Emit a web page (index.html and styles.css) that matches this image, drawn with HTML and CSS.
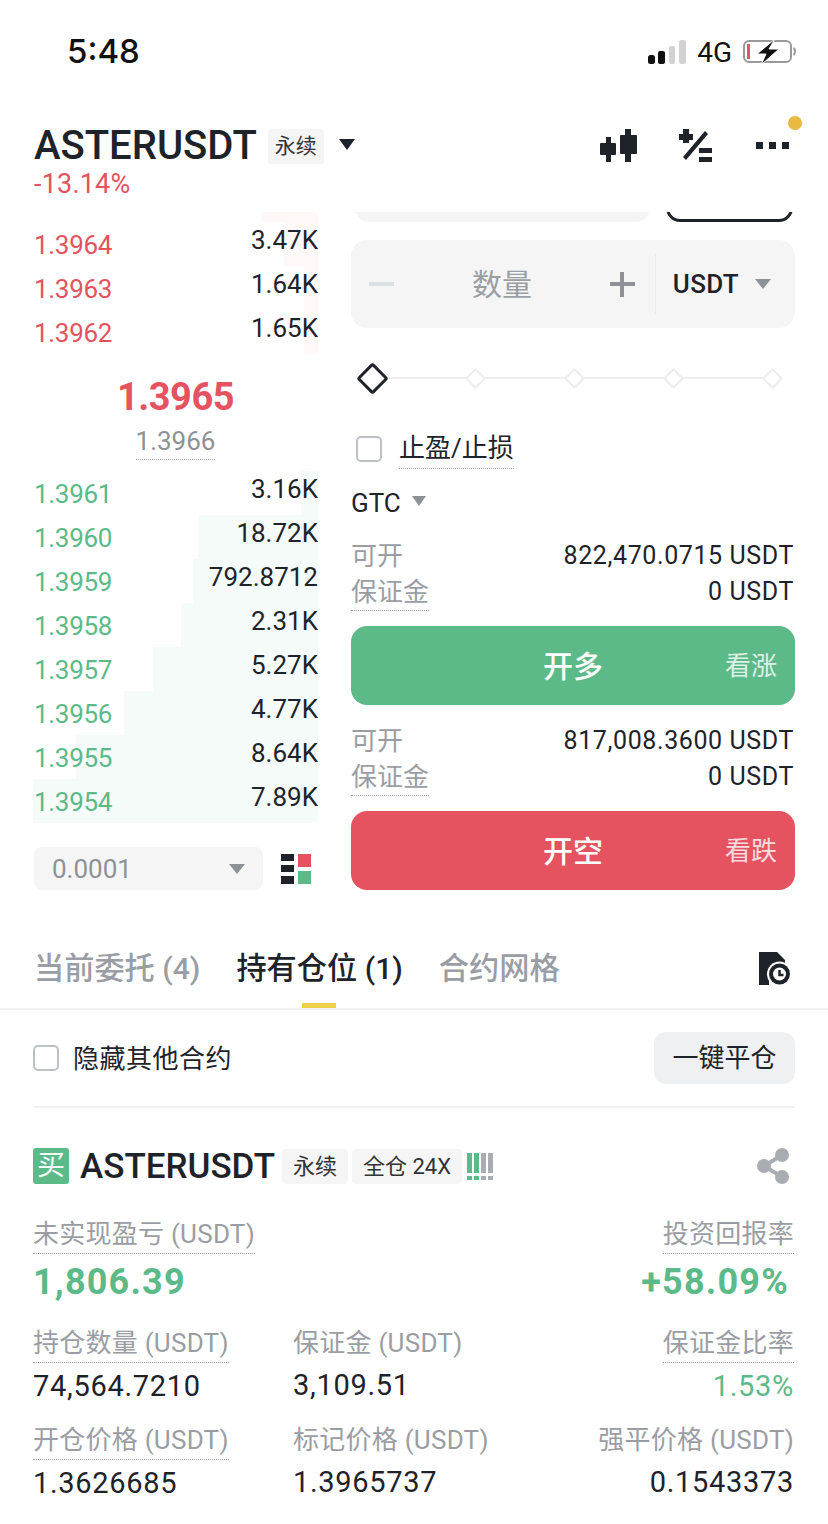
FILE: index.html
```html
<!DOCTYPE html>
<html lang="zh-CN">
<head>
<meta charset="UTF-8">
<meta name="viewport" content="width=device-width, initial-scale=1.0">
<title>ASTERUSDT</title>
<link rel="stylesheet" href="styles.css">
</head>
<body>
<div class="status-bar">
    <span class="time">5:48</span>
    <div class="status-right">
        <svg width="38" height="24" viewBox="0 0 38 24"><rect x="0" y="15" width="7" height="9" rx="2.500" fill="#111"/><rect x="10" y="11" width="7" height="13" rx="2" fill="#111"/><rect x="21" y="6" width="6" height="18" rx="2" fill="#d2d2d2"/><rect x="31" y="0" width="7" height="24" rx="2" fill="#d2d2d2"/></svg>
        <span class="net">4G</span>
        <svg width="53" height="26" viewBox="0 0 53 26"><rect x="1" y="2" width="47" height="21" rx="5" fill="none" stroke="#999" stroke-width="2"/><rect x="4" y="5" width="3" height="15" fill="#e4535f"/><path d="M50.500 9c2 1 2 6 0 7" fill="none" stroke="#999" stroke-width="2"/><path d="M32 0L14 15h9l-5 11 18-16h-10z" fill="#111" stroke="#fff" stroke-width="1"/></svg>
    </div>
</div>

<div class="header">
    <div class="title-block">
        <div class="title-row">
            <span class="symbol">ASTERUSDT</span>
            <span class="tag tag-head">永续</span>
            <span class="tri tri-dark"></span>
        </div>
        <div class="change">-13.14%</div>
    </div>
    <div class="header-icons">
        <!-- candles -->
        <svg width="37" height="33" viewBox="0 0 37 33"><g fill="#1e2329"><rect x="0" y="14" width="16" height="12" rx="1"/><rect x="6" y="8" width="5" height="25"/><rect x="20" y="6" width="17" height="19" rx="1"/><rect x="25" y="0" width="6" height="33"/></g></svg>
        <!-- plus / minus -->
        <svg width="34" height="33" viewBox="0 0 34 33"><g fill="#1e2329"><rect x="0" y="5" width="14" height="6"/><rect x="4" y="0" width="6" height="14"/><path d="M26 2l3 3-22 26-3-3z"/><rect x="20" y="19" width="13" height="5"/><rect x="20" y="28" width="13" height="5"/></g></svg>
        <div class="more">
            <i></i><i></i><i></i>
            <span class="dot"></span>
        </div>
    </div>
</div>

<div class="trade">
    <div class="book">
        <div class="book-rows ask-rows">
            <div class="row"><span class="depth depth-ask" style="width:12%"></span><span class="price red">1.3964</span><span class="qty">3.47K</span></div>
            <div class="row"><span class="depth depth-ask" style="width:5%"></span><span class="price red">1.3963</span><span class="qty">1.64K</span></div>
            <div class="row"><span class="depth depth-ask" style="width:5%"></span><span class="price red">1.3962</span><span class="qty">1.65K</span></div>
        </div>
        <div class="mid">
            <div class="mid-price">1.3965</div>
            <div class="mark"><span class="dotted">1.3966</span></div>
        </div>
        <div class="book-rows">
            <div class="row"><span class="depth depth-bid" style="width:6%"></span><span class="price green">1.3961</span><span class="qty">3.16K</span></div>
            <div class="row"><span class="depth depth-bid" style="width:42%"></span><span class="price green">1.3960</span><span class="qty">18.72K</span></div>
            <div class="row"><span class="depth depth-bid" style="width:44%"></span><span class="price green">1.3959</span><span class="qty">792.8712</span></div>
            <div class="row"><span class="depth depth-bid" style="width:48%"></span><span class="price green">1.3958</span><span class="qty">2.31K</span></div>
            <div class="row"><span class="depth depth-bid" style="width:58%"></span><span class="price green">1.3957</span><span class="qty">5.27K</span></div>
            <div class="row"><span class="depth depth-bid" style="width:68%"></span><span class="price green">1.3956</span><span class="qty">4.77K</span></div>
            <div class="row"><span class="depth depth-bid" style="width:85%"></span><span class="price green">1.3955</span><span class="qty">8.64K</span></div>
            <div class="row"><span class="depth depth-bid" style="width:100%"></span><span class="price green">1.3954</span><span class="qty">7.89K</span></div>
        </div>
        <div class="book-foot">
            <div class="step"><span>0.0001</span><span class="tri tri-gray"></span></div>
            <svg width="30" height="30" viewBox="0 0 30 30"><rect x="0" y="0" width="13" height="7" fill="#1e2329"/><rect x="0" y="11" width="13" height="7" fill="#1e2329"/><rect x="0" y="22" width="13" height="8" fill="#1e2329"/><rect x="17" y="0" width="13" height="13" fill="#e4535f"/><rect x="17" y="17" width="13" height="13" fill="#5cba89"/></svg>
        </div>
    </div>

    <div class="form">
        <div class="clipped">
            <div class="clip-input"></div>
            <div class="clip-btn"></div>
        </div>
        <div class="qty-input">
            <span class="pm minus"></span>
            <span class="qty-label">数量</span>
            <span class="pm plus"></span>
            <span class="qty-div"></span>
            <span class="unit">USDT</span>
            <span class="tri tri-gray"></span>
        </div>
        <div class="slider">
            <span class="knob knob-on"></span>
            <span class="track"></span><span class="knob"></span>
            <span class="track"></span><span class="knob"></span>
            <span class="track"></span><span class="knob"></span>
            <span class="track"></span><span class="knob"></span>
        </div>
        <div class="tpsl">
            <span class="check"></span>
            <span class="tpsl-label dotted">止盈/止损</span>
        </div>
        <div class="gtc"><span>GTC</span><span class="tri tri-gray"></span></div>
        <div class="info">
            <div class="info-row"><span class="info-key">可开</span><span>822,470.0715 USDT</span></div>
            <div class="info-row"><span class="info-key dotted">保证金</span><span>0 USDT</span></div>
        </div>
        <div class="action buy"><span class="action-main">开多</span><span class="action-sub">看涨</span></div>
        <div class="info">
            <div class="info-row"><span class="info-key">可开</span><span>817,008.3600 USDT</span></div>
            <div class="info-row"><span class="info-key dotted">保证金</span><span>0 USDT</span></div>
        </div>
        <div class="action sell"><span class="action-main">开空</span><span class="action-sub">看跌</span></div>
    </div>
</div>

<div class="tabs">
    <span class="tab">当前委托 (4)</span>
    <span class="tab tab-active">持有仓位 (1)</span>
    <span class="tab">合约网格</span>
    <svg class="tab-icon" width="31" height="33" viewBox="0 0 31 33"><path d="M0 0h18l8 8v20H0v5z" fill="#1e2329"/><path d="M0 28h10v5H0z" fill="#1e2329"/><circle cx="20.500" cy="22" r="12.500" fill="#fff"/><circle cx="20.500" cy="22" r="10.500" fill="#1e2329"/><circle cx="20.500" cy="22" r="6.500" fill="#fff"/><path d="M20.500 18v5h4" fill="none" stroke="#1e2329" stroke-width="2.500"/></svg>
</div>

<div class="filter">
    <div class="filter-left">
        <span class="check"></span>
        <span class="filter-text">隐藏其他合约</span>
    </div>
    <span class="close-all">一键平仓</span>
</div>

<div class="position">
    <div class="pos-head">
        <span class="buy-badge">买</span>
        <span class="pos-symbol">ASTERUSDT</span>
        <span class="tag">永续</span>
        <span class="tag">全仓 24X</span>
        <span class="risk"><i class="on"></i><i class="on"></i><i></i><i></i></span>
        <svg class="share" width="32" height="36" viewBox="0 0 32 36"><g fill="#a9adb2"><circle cx="25" cy="7" r="7"/><circle cx="7" cy="18" r="7"/><circle cx="25" cy="29" r="7"/></g><path d="M25 7L7 18l18 11" fill="none" stroke="#a9adb2" stroke-width="4"/></svg>
    </div>
    <div class="pnl-row">
        <div class="pnl-col">
            <span class="key dotted">未实现盈亏 (USDT)</span>
            <span class="pnl green">1,806.39</span>
        </div>
        <div class="pnl-col col-end">
            <span class="key dotted">投资回报率</span>
            <span class="pnl pnl-roe green">+58.09%</span>
        </div>
    </div>
    <div class="stats">
        <div class="stat"><span class="key dotted">持仓数量 (USDT)</span><span class="val">74,564.7210</span></div>
        <div class="stat"><span class="key">保证金 (USDT)</span><span class="val">3,109.51</span></div>
        <div class="stat col-end"><span class="key dotted">保证金比率</span><span class="val green">1.53%</span></div>
        <div class="stat"><span class="key dotted">开仓价格 (USDT)</span><span class="val">1.3626685</span></div>
        <div class="stat"><span class="key">标记价格 (USDT)</span><span class="val">1.3965737</span></div>
        <div class="stat col-end"><span class="key">强平价格 (USDT)</span><span class="val">0.1543373</span></div>
    </div>
</div>
</body>
</html>
```

FILE: styles.css
```css
* {
    box-sizing: border-box;
}
body {
    margin: 0;
    width: 828px;
    height: 1524px;
    overflow: hidden;
    background: #fff;
    color: #1e2329;
    font-family: 'Roboto', 'Noto Sans CJK SC', sans-serif;
}
.red { color: #e4535f; }
.green { color: #5cba89; }
.dotted {
    border-bottom: 1px dotted #9a9ea4;
}

/* status bar */
.status-bar {
    height: 100px;
    padding: 30px 32px 0 67px;
    display: flex;
    justify-content: space-between;
    align-items: flex-start;
}
.time {
    font-family: 'Inter', sans-serif;
    font-size: 33px;
    font-weight: 500;
    line-height: 42px;
    color: #111;
}
.status-right {
    display: flex;
    align-items: center;
    gap: 11px;
    height: 44px;
}
.net {
    font-size: 28px;
    color: #111;
}

/* header */
.header {
    height: 112px;
    padding: 24px 39px 0 34px;
    display: flex;
    justify-content: space-between;
    align-items: flex-start;
}
.title-row {
    display: flex;
    align-items: center;
    height: 44px;
}
.symbol {
    font-size: 40px;
    font-weight: 500;
    line-height: 44px;
}
.tag {
    background: #f5f5f5;
    border-radius: 4px;
    font-size: 21px;
    height: 35px;
    line-height: 35px;
    padding: 0 11px;
    color: #333;
}
.tag-head {
    margin-left: 11px;
    margin-right: 15px;
    padding: 0 7px;
}
.change {
    font-size: 27px;
    line-height: 30px;
    letter-spacing: .2px;
    color: #e4535f;
    margin-top: 1px;
}
.tri {
    width: 0;
    height: 0;
    flex-shrink: 0;
    border-left: 8px solid transparent;
    border-right: 8px solid transparent;
}
.tri-dark { border-top: 11px solid #1e2329; margin-top: -3px; }
.tri-gray { border-top: 10px solid #8e9297; }
.header-icons {
    display: flex;
    align-items: flex-start;
    gap: 42px;
    margin-top: 5px;
}
.more {
    position: relative;
    display: flex;
    gap: 6px;
    padding-top: 13px;
    margin-left: 1px;
}
.more i {
    width: 7px;
    height: 7px;
    background: #1e2329;
}
.dot {
    position: absolute;
    top: -13px;
    left: 32px;
    width: 14px;
    height: 14px;
    border-radius: 50%;
    background: #eab93f;
}

/* trade area */
.trade {
    display: flex;
    padding: 0 33px;
    gap: 33px;
}
.book {
    width: 285px;
    flex-shrink: 0;
}
.book-rows {
    display: flex;
    flex-direction: column;
}
.ask-rows {
    position: relative;
    padding-top: 6px;
}
.ask-rows::before {
    content: "";
    position: absolute;
    top: 0;
    right: 0;
    width: 57px;
    height: 10px;
    background: #fef8f8;
}
.row {
    position: relative;
    height: 44px;
    display: flex;
    justify-content: space-between;
    padding-left: 1px;
    font-size: 26px;
}
.price {
    position: relative;
    line-height: 44px;
    margin-top: 5px;
    height: 39px;
    letter-spacing: -.3px;
}
.qty {
    position: relative;
    line-height: 44px;
}
.depth {
    position: absolute;
    top: 4px;
    bottom: -4px;
    right: 0;
}
.depth-ask { background: #fef8f8; }
.depth-bid { background: #f4fbf8; }
.mid {
    height: 117px;
    text-align: center;
    padding-top: 25px;
}
.mid-price {
    font-size: 38px;
    font-weight: 700;
    line-height: 44px;
    letter-spacing: -.5px;
    color: #e4535f;
}
.mark {
    font-size: 26px;
    line-height: 38px;
    color: #8e9297;
    margin-top: 3px;
}
.mark .dotted {
    padding-bottom: 3px;
}
.book-foot {
    display: flex;
    align-items: center;
    justify-content: space-between;
    margin-top: 28px;
    padding-left: 1px;
    padding-right: 7px;
}
.step {
    width: 229px;
    height: 43px;
    background: #f5f5f5;
    border-radius: 8px;
    padding: 0 18px;
    display: flex;
    align-items: center;
    justify-content: space-between;
    font-size: 26px;
    color: #8e9297;
}

/* order form */
.form {
    width: 444px;
}
.clipped {
    height: 10px;
    display: flex;
    justify-content: space-between;
    align-items: flex-end;
    overflow: hidden;
    padding: 0 2px 0 4px;
}
.clip-input {
    width: 295px;
    height: 40px;
    flex-shrink: 0;
    background: #f5f5f5;
    border-radius: 14px;
}
.clip-btn {
    width: 127px;
    height: 40px;
    flex-shrink: 0;
    border: 3px solid #1e2329;
    border-radius: 14px;
}
.qty-input {
    margin-top: 18px;
    height: 88px;
    background: #f5f5f5;
    border-radius: 16px;
    display: flex;
    align-items: center;
    padding: 0 24px 0 18px;
}
.pm {
    position: relative;
    width: 25px;
    height: 25px;
    flex-shrink: 0;
}
.pm::before {
    content: "";
    position: absolute;
    left: 0;
    right: 0;
    top: 10px;
    height: 4px;
    background: #8e9297;
}
.minus::before {
    background: #dcdfe3;
}
.plus::after {
    content: "";
    position: absolute;
    top: 0;
    bottom: 0;
    left: 10px;
    width: 4px;
    background: #8e9297;
}
.qty-label {
    flex: 1;
    font-size: 30px;
    color: #9a9ea4;
    text-align: center;
    padding-bottom: 4px;
}
.qty-div {
    width: 1px;
    height: 60px;
    background: #ebebeb;
    margin: 0 17px 0 20px;
}
.unit {
    font-size: 26px;
    font-weight: 500;
    letter-spacing: .3px;
    margin-right: 16px;
}
.slider {
    margin-top: 35px;
    height: 30px;
    display: flex;
    align-items: center;
    padding: 0 15px 0 10px;
}
.knob {
    width: 15px;
    height: 15px;
    flex-shrink: 0;
    transform: rotate(45deg);
    border: 2px solid #ebedef;
    background: #fff;
    border-radius: 2px;
}
.knob-on {
    width: 23px;
    height: 23px;
    border: 3px solid #1e2329;
    border-radius: 3px;
}
.track {
    flex: 1;
    height: 2px;
    background: #ebedef;
}
.tpsl {
    margin-top: 35px;
    display: flex;
    align-items: center;
    gap: 17px;
    padding-left: 5px;
    height: 42px;
}
.check {
    width: 26px;
    height: 26px;
    border: 2px solid #bdc1c6;
    border-radius: 5px;
    flex-shrink: 0;
}
.tpsl-label {
    font-size: 26px;
    line-height: 38px;
    padding-bottom: 1px;
}
.gtc {
    margin-top: 16px;
    display: flex;
    align-items: center;
    gap: 11px;
    font-size: 26px;
    line-height: 34px;
}
.gtc .tri {
    border-left-width: 7px;
    border-right-width: 7px;
    margin-top: -4px;
}
.info {
    margin-top: 18px;
    font-size: 25px;
    letter-spacing: .6px;
}
.info-row {
    height: 36px;
    display: flex;
    justify-content: space-between;
    align-items: flex-start;
    line-height: 36px;
    padding-right: 1px;
}
.info-key {
    color: #9a9ea4;
    font-size: 26px;
    letter-spacing: 0;
}
.action {
    height: 79px;
    border-radius: 16px;
    display: flex;
    align-items: center;
    color: #fff;
    margin-top: 16px;
    padding: 0 18px 4px 192px;
    justify-content: space-between;
}
.buy { background: #5cba89; }
.sell { background: #e4535f; }
.action-main {
    font-size: 30px;
    font-weight: 500;
}
.action-sub {
    font-size: 26px;
    opacity: .8;
}

/* tabs */
.tabs {
    margin-top: 46px;
    height: 74px;
    border-bottom: 2px solid #f1f2f3;
    display: flex;
    gap: 36px;
    padding: 12px 38px 0 34px;
    font-size: 30.200px;
    color: #9a9ea4;
}
.tab {
    position: relative;
    line-height: 42px;
    font-weight: 500;
}
.tab-active {
    color: #1e2329;
}
.tab-active::after {
    content: "";
    position: absolute;
    left: 66px;
    bottom: 0;
    width: 34px;
    height: 5px;
    background: #f0cf4d;
}
.tab-icon {
    margin-left: auto;
    margin-top: 4px;
}

/* filter */
.filter {
    margin: 22px 33px 0;
    height: 52px;
    display: flex;
    justify-content: space-between;
    align-items: center;
    font-size: 26px;
}
.filter-left {
    display: flex;
    align-items: center;
    gap: 14px;
}
.filter-text {
    letter-spacing: .5px;
    padding-bottom: 4px;
}
.close-all {
    width: 141px;
    height: 52px;
    line-height: 52px;
    text-align: center;
    background: #eef0f2;
    border-radius: 12px;
}

/* position card */
.position {
    margin: 22px 33px 0;
    border-top: 2px solid #f1f2f3;
    padding-top: 38px;
}
.pos-head {
    display: flex;
    align-items: center;
    height: 40px;
    gap: 4px;
}
.buy-badge {
    width: 36px;
    height: 36px;
    line-height: 36px;
    text-align: center;
    background: #5cba89;
    color: #fff;
    border-radius: 3px;
    font-size: 28px;
    margin-right: 7px;
}
.pos-symbol {
    font-size: 35px;
    font-weight: 500;
    margin-right: 3px;
}
.pos-head .tag {
    font-size: 22px;
}
.risk {
    display: flex;
    gap: 2px;
    margin-left: 1px;
}
.risk i {
    display: block;
    width: 5px;
    height: 27px;
    background: linear-gradient(#a9adb2 0, #a9adb2 20px, transparent 20px, transparent 23px, #a9adb2 23px);
}
.risk i.on {
    background: linear-gradient(#5cba89 0, #5cba89 20px, transparent 20px, transparent 23px, #5cba89 23px);
}
.share {
    margin-left: auto;
    margin-right: 6px;
}
.pnl-row {
    display: flex;
    justify-content: space-between;
    margin-top: 29px;
}
.pnl-col {
    display: flex;
    flex-direction: column;
    align-items: flex-start;
}
.col-end {
    align-items: flex-end;
    margin-right: 1px;
}
.key {
    font-size: 26px;
    line-height: 38px;
    letter-spacing: .25px;
    color: #9a9ea4;
}
.pnl {
    font-size: 36px;
    font-weight: 700;
    line-height: 44px;
    margin-top: 6px;
    letter-spacing: 1.200px;
}
.pnl-roe {
    margin-right: 5px;
}
.stats {
    display: grid;
    grid-template-columns: 260px 1fr auto;
    margin-top: 20px;
    row-gap: 12px;
}
.stat {
    display: flex;
    flex-direction: column;
    align-items: flex-start;
}
.stat.col-end {
    align-items: flex-end;
}
.val {
    font-size: 29px;
    line-height: 46px;
    letter-spacing: .7px;
}
```
